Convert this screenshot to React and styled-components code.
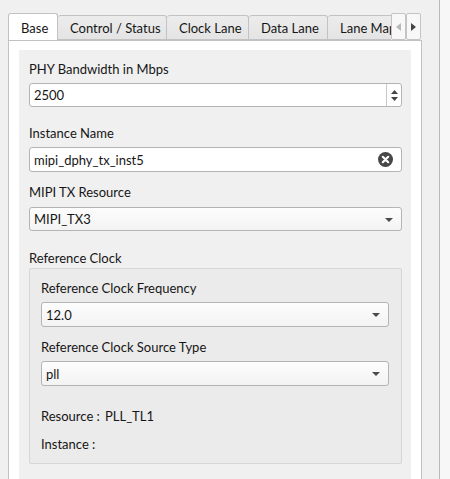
import React from "react";
import styled, { createGlobalStyle } from "styled-components";

const Global = createGlobalStyle`
  html, body { margin: 0; padding: 0; background: #f0f0f0; overflow: hidden; }
  body { font-family: Lato, "Open Sans", sans-serif; font-size: 13px; color: #161616; }
`;

const Page = styled.div`
  display: flex;
  height: 479px;
  width: 450px;
  overflow: hidden;
`;

const Main = styled.div`
  width: 440px;
  padding: 13px 0 0 8px;
  box-sizing: border-box;
  border-right: 1px solid #b9b9b9;
`;

const SideStrip = styled.div`
  flex: 1;
  background: #f7f7f7;
`;

const TabWidget = styled.div`
  width: 414px;
  display: flex;
  flex-direction: column;
  height: 600px;
`;

const TabBarRow = styled.div`
  display: flex;
  height: 27px;
  position: relative;
  z-index: 1;
`;

const TabStrip = styled.div`
  width: 383px;
  overflow: hidden;
  display: flex;
  align-items: flex-end;
`;

const Tab = styled.div`
  flex: none;
  box-sizing: border-box;
  width: ${(p) => p.$w}px;
  height: ${(p) => (p.$active ? 28 : 25)}px;
  margin-bottom: ${(p) => (p.$active ? -1 : 0)}px;
  display: flex;
  align-items: center;
  padding-left: ${(p) => p.$pl}px;
  white-space: nowrap;
  border: 1px solid #c2c2c2;
  border-bottom: ${(p) => (p.$active ? "none" : "1px solid #c2c2c2")};
  border-left: ${(p) => (p.$first || p.$active ? "1px solid #c2c2c2" : "none")};
  border-radius: 3px 3px 0 0;
  background: ${(p) =>
    p.$active ? "#ffffff" : "linear-gradient(#ececec, #e4e4e4)"};
  color: #161616;
  padding-top: ${(p) => (p.$active ? 0 : 1)}px;
`;

const ScrollButtons = styled.div`
  display: flex;
  height: 27px;
`;

const ScrollBtn = styled.div`
  width: 15px;
  height: 27px;
  box-sizing: border-box;
  border: 1px solid #c4c4c4;
  border-radius: 2px;
  background: #f8f8f8;
  display: flex;
  align-items: center;
  justify-content: center;
`;

const Pane = styled.div`
  flex: 1;
  background: #ffffff;
  border: 1px solid #c2c2c2;
  padding: 9px 10px 0 10px;
  display: flex;
`;

const Content = styled.div`
  flex: 1;
  background: #f0f0f0;
  padding: 0 9px 0 10px;
  display: flex;
  flex-direction: column;
`;

const Label = styled.div`
  height: 16px;
  line-height: 16px;
  margin-top: ${(p) => p.$mt}px;
  white-space: nowrap;
`;

const Box = styled.div`
  margin-top: ${(p) => p.$mt}px;
  height: ${(p) => p.$h || 24}px;
  box-sizing: border-box;
  border: 1px solid #b4b4b4;
  border-radius: 3px;
  background: ${(p) =>
    p.$combo ? "linear-gradient(#fdfdfd, #f3f3f3)" : "#ffffff"};
  display: flex;
  align-items: center;
  padding-left: ${(p) => p.$pl || 4}px;
`;

const BoxText = styled.div`
  flex: 1;
`;

const SpinArrows = styled.div`
  width: 14px;
  height: 100%;
  border-left: 1px solid #c8c8c8;
  display: flex;
  flex-direction: column;
  align-items: center;
  justify-content: center;
  gap: 3px;
`;

const ComboArrow = styled.div`
  width: 0;
  height: 0;
  border-left: 4px solid transparent;
  border-right: 4px solid transparent;
  border-top: 4px solid #4a4a4a;
  margin-right: 8px;
  margin-top: 1px;
`;

const ClearIcon = styled.svg`
  margin-right: 8px;
`;

const Group = styled.div`
  margin-top: 2px;
  height: 196px;
  box-sizing: border-box;
  border: 1px solid #d6d6d6;
  border-radius: 2px;
  background: #ebebeb;
  padding: 0 12px 0 11px;
  display: flex;
  flex-direction: column;
`;

const InfoRow = styled.div`
  display: flex;
  height: 16px;
  line-height: 16px;
  margin-top: ${(p) => p.$mt}px;
  white-space: pre;
`;

const InfoKey = styled.span`
  width: 64px;
`;

const Tri = ({ dir, color }) => {
  const pts = {
    up: "0,4 3.5,0 7,4",
    down: "0,0 7,0 3.5,4",
    left: "5,0 5,8 0,4",
    right: "0,0 0,8 5,4",
  }[dir];
  const w = dir === "left" || dir === "right" ? 5 : 7;
  const h = dir === "left" || dir === "right" ? 8 : 4;
  return (
    <svg width={w} height={h} viewBox={`0 0 ${w} ${h}`}>
      <polygon points={pts} fill={color} />
    </svg>
  );
};

export default function App() {
  const tabs = [
    { t: "Base", w: 50, pl: 12, active: true },
    { t: "Control / Status", w: 109, pl: 12 },
    { t: "Clock Lane", w: 82, pl: 12 },
    { t: "Data Lane", w: 79, pl: 12 },
    { t: "Lane Map", w: 80, pl: 12 },
  ];
  return (
    <>
      <Global />
      <Page>
        <Main>
          <TabWidget>
            <TabBarRow>
              <TabStrip>
                {tabs.map((tb, i) => (
                  <Tab
                    key={tb.t}
                    $w={tb.w}
                    $pl={tb.pl}
                    $active={tb.active}
                    $first={i === 0}
                  >
                    {tb.t}
                  </Tab>
                ))}
              </TabStrip>
              <ScrollButtons>
                <ScrollBtn>
                  <Tri dir="left" color="#b8b8b8" />
                </ScrollBtn>
                <ScrollBtn>
                  <Tri dir="right" color="#444" />
                </ScrollBtn>
              </ScrollButtons>
            </TabBarRow>
            <Pane>
              <Content>
                <Label $mt={11}>PHY Bandwidth in Mbps</Label>
                <Box $mt={6} $h={24}>
                  <BoxText>2500</BoxText>
                  <SpinArrows>
                    <Tri dir="up" color="#444" />
                    <Tri dir="down" color="#444" />
                  </SpinArrows>
                </Box>
                <Label $mt={18}>Instance Name</Label>
                <Box $mt={6} $h={25}>
                  <BoxText>mipi_dphy_tx_inst5</BoxText>
                  <ClearIcon width="15" height="15" viewBox="0 0 15 15">
                    <circle cx="7.5" cy="7.5" r="7.5" fill="#474747" />
                    <path
                      d="M4.8 4.8 L10.2 10.2 M10.2 4.8 L4.8 10.2"
                      stroke="#fff"
                      strokeWidth="2.2"
                      strokeLinecap="round"
                    />
                  </ClearIcon>
                </Box>
                <Label $mt={12}>MIPI TX Resource</Label>
                <Box $mt={7} $h={24} $combo>
                  <BoxText>MIPI_TX3</BoxText>
                  <ComboArrow />
                </Box>
                <Label $mt={19}>Reference Clock</Label>
                <Group>
                  <Label $mt={11}>Reference Clock Frequency</Label>
                  <Box $mt={6} $h={25} $combo>
                    <BoxText>12.0</BoxText>
                    <ComboArrow />
                  </Box>
                  <Label $mt={12}>Reference Clock Source Type</Label>
                  <Box $mt={6} $h={25} $combo>
                    <BoxText>pll</BoxText>
                    <ComboArrow />
                  </Box>
                  <InfoRow $mt={22}>
                    <InfoKey>Resource :</InfoKey>
                    <span>PLL_TL1</span>
                  </InfoRow>
                  <InfoRow $mt={12}>
                    <InfoKey>Instance :</InfoKey>
                  </InfoRow>
                </Group>
              </Content>
            </Pane>
          </TabWidget>
        </Main>
        <SideStrip />
      </Page>
    </>
  );
}
